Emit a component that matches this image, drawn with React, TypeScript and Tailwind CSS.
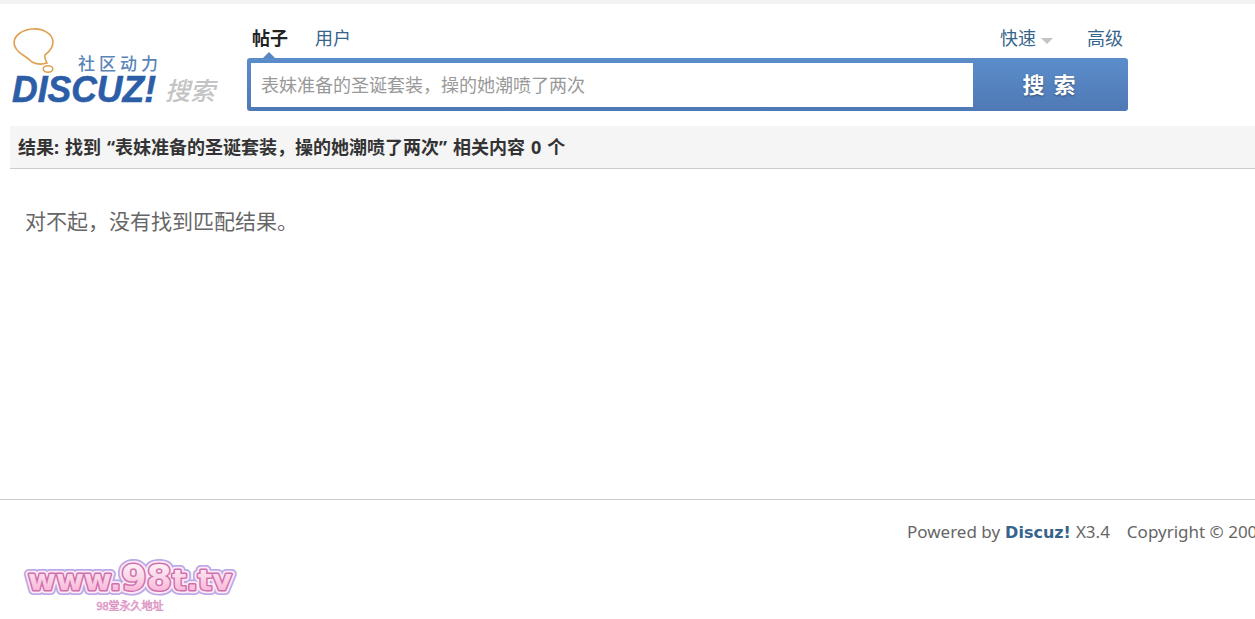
import React from 'react';

const FONT = "font-['Noto_Sans','Noto_Sans_CJK_SC',sans-serif]";

const DiscuzLogo = () => (
  <svg width="212" height="80" viewBox="0 0 212 80" className="block">
    <path
      d="M20 1 C31 0 41 6 41 14 C41 20 37 24 33 27 C32 30 34 33 35 35 C29 37 24 36 20 34 C17 31 14 29 11 27 C6 24 2 20 2 14 C3 7 10 2 20 1 Z"
      fill="none"
      stroke="#e0a050"
      strokeWidth="1.6"
    />
    <ellipse cx="36" cy="41" rx="4.8" ry="3.2" fill="none" stroke="#e0a050" strokeWidth="1.6" />
    <text x="66" y="42" fontSize="17" fontWeight="500" letterSpacing="4" fill="#5b84b8" fontFamily="'Noto Sans CJK SC', sans-serif">
      社区动力
    </text>
    <text
      x="0"
      y="74"
      fontSize="36"
      fontWeight="700"
      fontStyle="italic"
      textLength="144"
      lengthAdjust="spacingAndGlyphs"
      fill="#2c5ea8"
      stroke="#2c5ea8"
      strokeWidth="0.6"
      fontFamily="'Liberation Sans', sans-serif"
    >
      DISCUZ!
    </text>
    <text x="153" y="72" fontSize="25" fontWeight="500" fontStyle="italic" fill="#c4c4c4" fontFamily="'Noto Sans CJK SC', sans-serif">
      搜索
    </text>
  </svg>
);

const BadgeLine = (props: React.SVGProps<SVGTextElement>) => (
  <text x="110" y="33" textLength="204" lengthAdjust="spacingAndGlyphs" {...props}>
    <tspan fontSize="29">www.</tspan>
    <tspan fontSize="35">98</tspan>
    <tspan fontSize="29">t.tv</tspan>
  </text>
);

const SiteBadge = () => (
  <svg width="224" height="60" viewBox="0 0 224 60" className="block">
    <defs>
      <linearGradient id="badgeFill" x1="0" y1="0" x2="0" y2="1">
        <stop offset="0" stopColor="#ffffff" />
        <stop offset="1" stopColor="#f7a9cf" />
      </linearGradient>
    </defs>
    <g fontFamily="'DejaVu Sans', sans-serif" fontWeight="700" strokeLinejoin="round" textAnchor="middle">
      <BadgeLine fill="none" stroke="#bba8e8" strokeWidth="10" />
      <BadgeLine fill="none" stroke="#fdeaf4" strokeWidth="6.5" />
      <BadgeLine fill="none" stroke="#cf6fae" strokeWidth="3" />
      <BadgeLine fill="url(#badgeFill)" />
    </g>
    <text
      x="110"
      y="53"
      fontSize="11"
      textAnchor="middle"
      fill="#fbe4ef"
      stroke="#d98cc0"
      strokeWidth="0.6"
      fontFamily="'Noto Sans CJK SC', sans-serif"
    >
      98堂永久地址
    </text>
  </svg>
);

export default function App() {
  return (
    <div className={`${FONT} h-[619px] w-[1255px] overflow-hidden bg-white text-[18px] text-[#666]`}>
      <div className="h-1 bg-[#f2f2f2]" />

      <header className="flex h-[122px] pl-3">
        <div className="w-[235px] pt-6">
          <DiscuzLogo />
        </div>
        <div className="w-[881px]">
          <div className="flex h-[54px] items-start pt-[22px] leading-[25px] text-[#36648b]">
            <div className="relative ml-[5px] w-[63px] font-bold text-[#222]">
              帖子
              <span className="absolute top-[26px] left-[11px] h-0 w-0 border-x-[6px] border-b-[6px] border-x-transparent border-b-[#5b86c2]" />
            </div>
            <div>用户</div>
            <div className="ml-auto flex items-center">
              快速
              <span className="mt-1 ml-[5px] h-0 w-0 border-x-[6px] border-t-[6px] border-x-transparent border-t-[#c4c4c4]" />
            </div>
            <div className="mr-[5px] ml-[34px]">高级</div>
          </div>
          <div className="flex h-[53px] rounded-[3px] bg-gradient-to-b from-[#5b8dcb] to-[#4f79b5] pt-[5px] pl-1">
            <div className="flex h-11 w-[722px] items-center bg-white pl-[10px] text-[#999]">
              表妹准备的圣诞套装，操的她潮喷了两次
            </div>
            <div className="flex flex-1 justify-center pt-[5px] pl-[6px] text-[22px] leading-[32px] font-bold tracking-[9px] text-white [text-shadow:0_1px_2px_rgba(0,0,0,0.4)]">
              搜索
            </div>
          </div>
        </div>
      </header>

      <div className="ml-[10px] flex h-[43px] items-center border-b border-[#ccc] bg-[#f5f5f5] pl-2 font-bold text-[#333] [word-spacing:1.3px]">
        结果: 找到 “表妹准备的圣诞套装，操的她潮喷了两次” 相关内容 0 个
      </div>

      <p className="h-[330px] pt-[38px] pl-[25px] text-[21px] leading-[28px]">对不起，没有找到匹配结果。</p>

      <footer className="border-t border-[#ccc]">
        <div className="flex items-baseline pt-[20px] pl-[907px] text-[17px] leading-[24px] whitespace-nowrap">
          <span>Powered by</span>
          <strong className="ml-[5px] font-['DejaVu_Sans',sans-serif] text-[16px] text-[#36648b]">Discuz!</strong>
          <span className="ml-[5px]">X3.4</span>
          <span className="ml-[17px]">Copyright © 2001-2020</span>
        </div>
        <div className="pt-[12px] pl-[20px]">
          <SiteBadge />
        </div>
      </footer>
    </div>
  );
}
